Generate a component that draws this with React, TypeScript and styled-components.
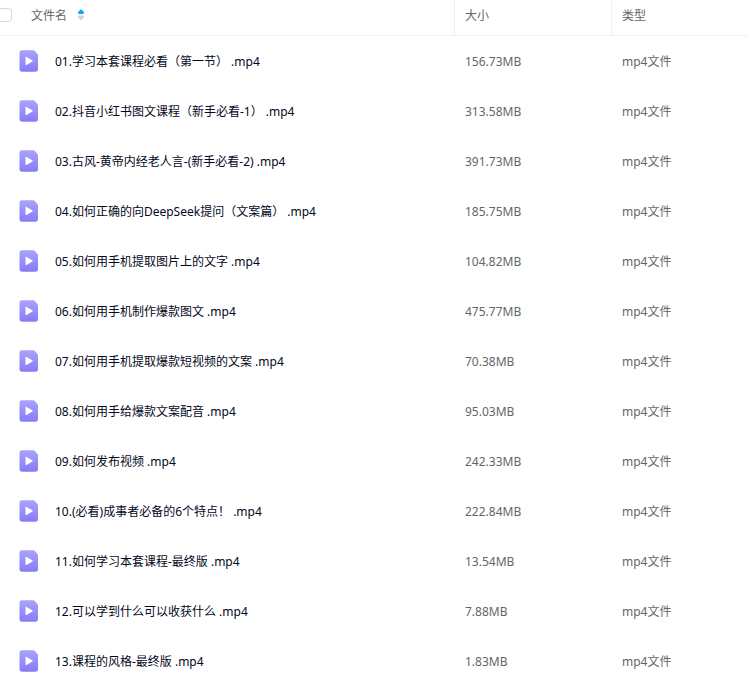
import React from "react";
import styled, { createGlobalStyle } from "styled-components";

const GlobalStyle = createGlobalStyle`
  * { box-sizing: border-box; }
  body {
    margin: 0;
    background: #fff;
    font-family: "Noto Sans", "Noto Sans CJK SC", sans-serif;
    font-size: 12px;
    line-height: 18px;
  }
`;

const ListFrame = styled.main`
  width: 100%;
  overflow: hidden;
`;

const FileTable = styled.table`
  width: 100%;
  table-layout: fixed;
  border-collapse: separate;
  border-spacing: 0;
`;

const HeaderCell = styled.th<{ $width?: number; $first?: boolean }>`
  width: ${(p) => (p.$width ? `${p.$width}px` : "auto")};
  height: 36px;
  padding: ${(p) => (p.$first ? "0 0 5px" : "0 10px 3px")};
  border-bottom: 1px solid #f0f1f3;
  border-left: ${(p) => (p.$first ? "none" : "1px solid #f0f1f3")};
  color: #666;
  font-weight: 400;
  text-align: left;
`;

const HeaderContent = styled.div`
  display: flex;
  align-items: center;
`;

const SelectAll = styled.input`
  appearance: none;
  flex: none;
  width: 14px;
  height: 14px;
  margin: 0 19px 0 -2px;
  border: 1px solid #d4d7de;
  border-radius: 4px;
  background: #fff;

  &:checked {
    background: #06a7ff;
    border-color: #06a7ff;
  }
`;

const SortButton = styled.button`
  display: flex;
  align-items: center;
  gap: 10px;
  padding: 0;
  border: 0;
  background: none;
  color: inherit;
  font: inherit;
  cursor: pointer;
`;

const Label = styled.span`
  padding-top: 2px;
`;

const Row = styled.tr`
  &:hover {
    background: #fafafc;
  }
`;

const Cell = styled.td`
  height: 50px;
  padding: 2px 10px 0 11px;
  color: #666;
  white-space: nowrap;
`;

const NameCell = styled(Cell)`
  padding: 0 10px 0 19px;
`;

const FileLink = styled.a`
  display: flex;
  align-items: center;
  gap: 16px;
  color: #03081a;
  text-decoration: none;
`;

const Icon = styled.svg`
  display: block;
  flex: none;
`;

const SortIcon = () => (
  <Icon width="8" height="12" viewBox="0 0 8 12" aria-hidden="true">
    <path d="M4 .3 6.8 2.8Q7.4 5 6 5H2Q.6 5 1.2 2.8Z" fill="#06a7ff" />
    <path d="M4 11.2 1.2 8.7Q.6 6.6 2 6.6H6Q7.4 6.6 6.8 8.7Z" fill="#d0d3da" />
  </Icon>
);

const VideoIcon = () => (
  <Icon width="20" height="22" viewBox="0 0 20 22" aria-hidden="true">
    <defs>
      <linearGradient id="video-fill" x1="0" y1="0" x2="0" y2="1">
        <stop offset="0" stopColor="#a9a3fb" />
        <stop offset="1" stopColor="#877bf8" />
      </linearGradient>
    </defs>
    <path
      d="M3 .3H14.5Q15.3 .3 15.8 .9L18.6 4.2Q19 4.7 19 5.4V19Q19 21.7 16.3 21.7H3.2Q.5 21.7 .5 19V3Q.5 .3 3 .3Z"
      fill="url(#video-fill)"
    />
    <path
      d="M6.5 7.5Q6.5 6.4 7.5 6.9L13.3 10.3Q14.1 10.9 13.3 11.5L7.5 14.9Q6.5 15.4 6.5 14.3Z"
      fill="#fff"
    />
  </Icon>
);

const files = [
  { name: "01.学习本套课程必看（第一节） .mp4", size: "156.73MB" },
  { name: "02.抖音小红书图文课程（新手必看-1） .mp4", size: "313.58MB" },
  { name: "03.古风-黄帝内经老人言-(新手必看-2) .mp4", size: "391.73MB" },
  { name: "04.如何正确的向DeepSeek提问（文案篇） .mp4", size: "185.75MB" },
  { name: "05.如何用手机提取图片上的文字 .mp4", size: "104.82MB" },
  { name: "06.如何用手机制作爆款图文 .mp4", size: "475.77MB" },
  { name: "07.如何用手机提取爆款短视频的文案 .mp4", size: "70.38MB" },
  { name: "08.如何用手给爆款文案配音 .mp4", size: "95.03MB" },
  { name: "09.如何发布视频 .mp4", size: "242.33MB" },
  { name: "10.(必看)成事者必备的6个特点！ .mp4", size: "222.84MB" },
  { name: "11.如何学习本套课程-最终版 .mp4", size: "13.54MB" },
  { name: "12.可以学到什么可以收获什么 .mp4", size: "7.88MB" },
  { name: "13.课程的风格-最终版 .mp4", size: "1.83MB" },
];

export default function App() {
  return (
    <ListFrame lang="zh-CN">
      <GlobalStyle />
      <FileTable>
        <thead>
          <tr>
            <HeaderCell $first scope="col" aria-sort="ascending">
              <HeaderContent>
                <SelectAll type="checkbox" aria-label="全选" />
                <SortButton type="button">
                  <Label>文件名</Label>
                  <SortIcon />
                </SortButton>
              </HeaderContent>
            </HeaderCell>
            <HeaderCell $width={157} scope="col">大小</HeaderCell>
            <HeaderCell $width={136} scope="col">类型</HeaderCell>
          </tr>
        </thead>
        <tbody>
          {files.map((file) => (
            <Row key={file.name}>
              <NameCell>
                <FileLink href="#">
                  <VideoIcon />
                  <Label>{file.name}</Label>
                </FileLink>
              </NameCell>
              <Cell>{file.size}</Cell>
              <Cell>mp4文件</Cell>
            </Row>
          ))}
        </tbody>
      </FileTable>
    </ListFrame>
  );
}
